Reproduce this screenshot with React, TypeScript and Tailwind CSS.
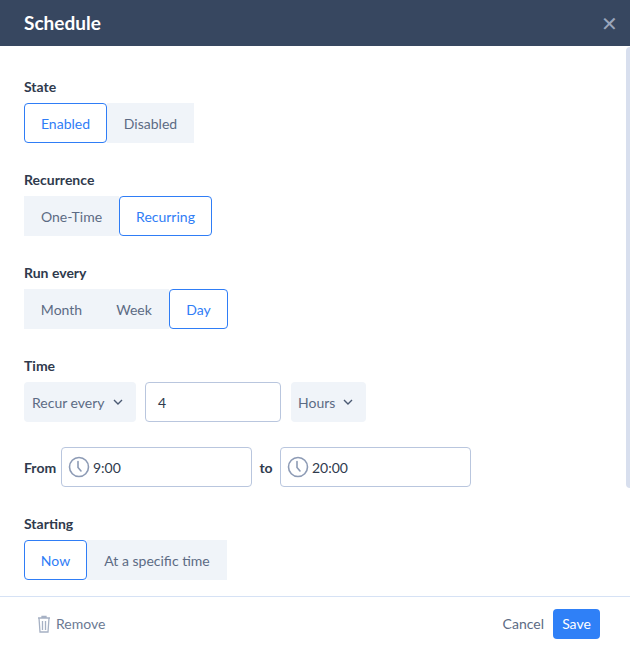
import React from "react";

const Clock = () => (
  <svg width="22" height="22" viewBox="0 0 22 22" fill="none" stroke="#8d9bb5" strokeWidth="1.6" strokeLinecap="round">
    <circle cx="11" cy="11" r="9.5" />
    <path d="M10 5.5v6l3 3.5" />
  </svg>
);
const Chev = () => (
  <svg width="10" height="6" viewBox="0 0 10 6" fill="none" stroke="#4b5a73" strokeWidth="1.4"><path d="M1 1l4 4 4-4" /></svg>
);

function Seg({ items, active, widths }: { items: string[]; active: number; widths: string[] }) {
  return (
    <div className="flex">
      {items.map((t, i) => (
        <div key={t} className={`h-[40px] flex items-center justify-center text-[14px] ${widths[i]} ${i === active ? "bg-white border border-[#2f7df6] rounded-[4px] text-[#2f7df6]" : "bg-[#f0f4f9] text-[#5c6b84]"}`}>{t}</div>
      ))}
    </div>
  );
}

const Label = ({ children, cls = "" }: { children: React.ReactNode; cls?: string }) => (
  <div className={`h-[20px] leading-[20px] text-[14px] font-bold text-[#2f3a4d] mb-[6px] ${cls}`}>{children}</div>
);

export default function App() {
  return (
    <div className="w-[630px] h-[650px] bg-white flex flex-col relative overflow-hidden" style={{ fontFamily: "Lato, 'Open Sans', sans-serif" }}>
      <div className="h-[46px] bg-[#374760] flex items-center justify-between px-[24px] shrink-0">
        <span className="text-white text-[19px] font-bold">Schedule</span>
        <span className="text-[#9aa6bb] text-[20px] mr-[-12px]">✕</span>
      </div>
      <div className="absolute right-0 top-[47px] w-[4px] h-[441px] bg-[#d8dfee] rounded-l" />
      <div className="flex-1 pl-[24px] pt-[31px]">
        <Label>State</Label>
        <Seg items={["Enabled", "Disabled"]} active={0} widths={["w-[83px]", "w-[87px]"]} />
        <Label cls="mt-[27px]">Recurrence</Label>
        <Seg items={["One-Time", "Recurring"]} active={1} widths={["w-[95px]", "w-[93px]"]} />
        <Label cls="mt-[27px]">Run every</Label>
        <Seg items={["Month", "Week", "Day"]} active={2} widths={["w-[75px]", "w-[70px]", "w-[59px]"]} />
        <Label cls="mt-[27px]">Time</Label>
        <div className="flex items-center h-[40px]">
          <div className="w-[112px] h-[40px] bg-[#f0f4f9] rounded-[4px] flex items-center pl-[8px] gap-[8px] text-[14px] text-[#5c6b84]">Recur every <Chev /></div>
          <div className="ml-[9px] w-[136px] h-[40px] border border-[#b9c6de] rounded-[4px] flex items-center pl-[12px] text-[14px] text-[#2f3a4d]">4</div>
          <div className="ml-[10px] w-[75px] h-[40px] bg-[#f0f4f9] rounded-[4px] flex items-center pl-[7px] gap-[8px] text-[14px] text-[#5c6b84]">Hours <Chev /></div>
        </div>
        <div className="flex items-center h-[40px] mt-[25px]">
          <span className="text-[14px] font-bold text-[#2f3a4d] w-[37px]">From</span>
          <div className="w-[191px] h-[40px] border border-[#b9c6de] rounded-[4px] flex items-center pl-[6px] gap-[3px] text-[14px] text-[#2f3a4d]"><Clock />9:00</div>
          <span className="text-[14px] font-bold text-[#2f3a4d] w-[28px] text-center">to</span>
          <div className="w-[191px] h-[40px] border border-[#b9c6de] rounded-[4px] flex items-center pl-[6px] gap-[3px] text-[14px] text-[#2f3a4d]"><Clock />20:00</div>
        </div>
        <Label cls="mt-[27px]">Starting</Label>
        <Seg items={["Now", "At a specific time"]} active={0} widths={["w-[63px]", "w-[140px]"]} />
      </div>
      <div className="h-[54px] border-t border-[#d6e2f5] flex items-center justify-between pl-[37px] pr-[30px] shrink-0">
        <div className="flex items-center gap-[5px] text-[14px] text-[#6b7a93]">
          <svg width="14" height="18" viewBox="0 0 14 18" fill="none" stroke="#a6b1c4" strokeWidth="1.3">
            <path d="M1 3h12M5 3V1.5h4V3M2 3l1 14h8l1-14M5.5 6v9M8.5 6v9" />
          </svg>
          Remove
        </div>
        <div className="flex items-center gap-[9px]">
          <span className="text-[14px] text-[#5c6b84]">Cancel</span>
          <div className="h-[30px] w-[47px] bg-[#2f80f7] rounded-[4px] text-white text-[14px] flex items-center justify-center">Save</div>
        </div>
      </div>
    </div>
  );
}
